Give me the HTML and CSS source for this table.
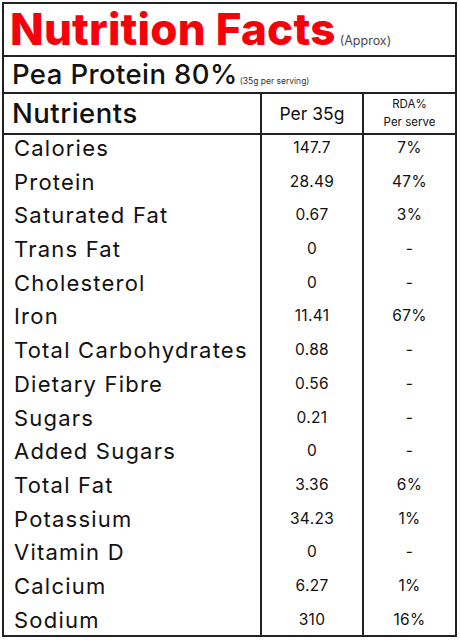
FILE: index.html
```
<!doctype html>
<html lang="en">
<head>
	<meta charset="UTF-8">
	<title>Nutrition Facts</title>
	<link rel="stylesheet" href="styles.css">
</head>
<body>
	<div class="label">
		<div class="title">
			<h1>Nutrition Facts</h1><span class="approx">(Approx)</span>
		</div>
		<div class="product">
			<h2>Pea Protein 80%</h2><span class="serving">(35g per serving)</span>
		</div>
		<div class="facts">
			<div class="head hname">Nutrients</div>
			<div class="head per">Per 35g</div>
			<div class="head rda">RDA%<br>Per serve</div>

			<div class="name">Calories</div><div class="val">147.7</div><div class="pct">7%</div>
			<div class="name">Protein</div><div class="val">28.49</div><div class="pct">47%</div>
			<div class="name">Saturated Fat</div><div class="val">0.67</div><div class="pct">3%</div>
			<div class="name">Trans Fat</div><div class="val">0</div><div class="pct">-</div>
			<div class="name">Cholesterol</div><div class="val">0</div><div class="pct">-</div>
			<div class="name">Iron</div><div class="val">11.41</div><div class="pct">67%</div>
			<div class="name">Total Carbohydrates</div><div class="val">0.88</div><div class="pct">-</div>
			<div class="name">Dietary Fibre</div><div class="val">0.56</div><div class="pct">-</div>
			<div class="name">Sugars</div><div class="val">0.21</div><div class="pct">-</div>
			<div class="name">Added Sugars</div><div class="val">0</div><div class="pct">-</div>
			<div class="name">Total Fat</div><div class="val">3.36</div><div class="pct">6%</div>
			<div class="name">Potassium</div><div class="val">34.23</div><div class="pct">1%</div>
			<div class="name">Vitamin D</div><div class="val">0</div><div class="pct">-</div>
			<div class="name">Calcium</div><div class="val">6.27</div><div class="pct">1%</div>
			<div class="name">Sodium</div><div class="val">310</div><div class="pct">16%</div>
		</div>
	</div>
</body>
</html>
```
FILE: styles.css
```
body{margin:0;background:#fff;font-family:Inter,"Noto Sans",sans-serif;color:#111;}

.label{width:455px;
	box-sizing:border-box;
	margin:2px 0 0 2px;
	border:2px solid #222;
	}

/* top heading */
.title{height:53px;
	box-sizing:border-box;
	border-bottom:2px solid #222;
	padding:3px 0 0 6px;
	line-height:44px;
	white-space:nowrap;
	}
h1{display:inline;
	margin:0;
	font-size:44px;
	font-weight:800;
	color:#f7000c;
	letter-spacing:0.2px;
	}
.approx{font-size:12.5px;color:#4a4a4a;margin-left:4px;}

.product{height:37px;
	box-sizing:border-box;
	border-bottom:2px solid #222;
	padding-left:8px;
	line-height:35px;
	white-space:nowrap;
	}
h2{display:inline;
	margin:0;
	font-size:27.5px;
	font-weight:500;
	letter-spacing:0.4px;
	}
.serving{font-size:8.5px;color:#333;margin-left:2px;}

/* table */
.facts{display:grid;
	grid-template-columns:256px 104px 1fr;
	grid-template-rows:41px repeat(14,33.7px) 28.2px;
	}
.name{padding-left:10px;
	font-size:22px;
	line-height:26px;
	letter-spacing:0.055em;
	white-space:nowrap;
	}
.val,.pct{text-align:center;font-size:15.5px;line-height:26px;letter-spacing:0.3px;}
.val{border-left:2px solid #222;border-right:2px solid #222;}

.head{box-sizing:border-box;
	border-bottom:2px solid #222;
	display:flex;
	align-items:center;
	}
.hname{padding-left:8px;font-size:27.5px;font-weight:500;letter-spacing:0.5px;line-height:39px;}
.per{justify-content:center;font-size:17.5px;border-left:2px solid #222;border-right:2px solid #222;}
.rda{justify-content:center;text-align:center;font-size:11.5px;line-height:18px;padding-bottom:1px;}
```
